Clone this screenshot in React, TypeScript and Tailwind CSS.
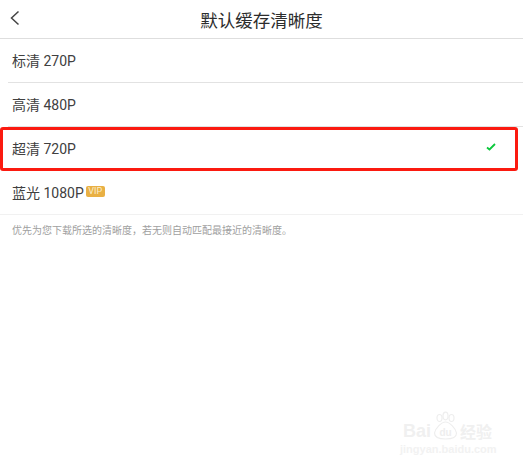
import React from "react";

const font = { fontFamily: '"Roboto", "Noto Sans CJK SC", sans-serif' };

const Row = ({ label }: { label: string }) => (
  <div className="ml-2 h-11 flex items-center pl-1 pr-6 pt-[2px] border-b border-[#e2e2e2]">
    <span className="text-[14px] text-[#404040]">{label}</span>
  </div>
);

const App = () => {
  return (
    <div className="relative w-[523px] h-[468px] bg-white overflow-hidden" style={font}>
      {/* Header */}
      <div className="relative h-[39px] pt-[4px] border-b border-[#dedede] flex items-center justify-center">
        <svg className="absolute left-[9px] top-[10px]" width="12" height="16" viewBox="0 0 12 16" fill="none">
          <path d="M9.5 1.5 L2.5 8 L9.5 14.5" stroke="#444" strokeWidth="1.5" />
        </svg>
        <h1 className="text-[17.5px] font-normal text-[#2c2c2c]">默认缓存清晰度</h1>
      </div>

      <Row label="标清 270P" />
      <Row label="高清 480P" />

      {/* Selected row */}
      <div className="relative h-11 flex items-center pl-3 pr-[27px] pt-[1px] justify-between">
        <span className="text-[14px] text-[#404040]">超清 720P</span>
        <svg width="10" height="8" viewBox="0 0 10 8" fill="none" className="mb-[5px]">
          <path d="M1 4.5 L3.5 6.5 L9 1" stroke="#0cc83c" strokeWidth="1.8" />
        </svg>
        <div className="absolute left-0 top-0 w-[518px] h-[44px] border-[3px] border-[#fb1a10] rounded-[3px]" />
      </div>

      <div className="h-[44px] flex items-center pl-3 pt-[1px] border-b border-[#f1f1f1]">
        <span className="text-[14px] text-[#404040]">蓝光 1080P</span>
        <span className="ml-[2px] w-[19px] h-[11px] mb-[3px] rounded-[2px] bg-[#e9b044] text-[9px] leading-[11px] text-center text-[#fbeecb]">
          VIP
        </span>
      </div>

      <p className="pl-3 pt-[9px] text-[10px] leading-[13px] text-[#a0a0a0]">
        优先为您下载所选的清晰度，若无则自动匹配最接近的清晰度。
      </p>

      {/* Watermark */}
      <div className="absolute left-[403px] top-[411px] w-[112px] text-[#f0f0f0] select-none">
        <div className="flex items-end h-[30px]">
          <span className="text-[18px] leading-[20px] font-bold" style={{ fontFamily: '"Liberation Sans", sans-serif' }}>Bai</span>
          <svg width="29" height="30" viewBox="0 0 26 30" className="shrink-0">
            <g fill="none" stroke="#eeeeee" strokeWidth="1.2">
              <ellipse cx="7" cy="7" rx="2.5" ry="3.5" />
              <ellipse cx="13" cy="5" rx="2.5" ry="3.8" />
              <ellipse cx="19" cy="7" rx="2.5" ry="3.5" />
              <path d="M13 11 C9 11 3 17 2 22 C2 27 7 28 13 28 C19 28 24 27 24 22 C23 17 17 11 13 11 Z" />
            </g>
            <text x="13" y="25" textAnchor="middle" fontSize="10" fontWeight="700" fill="#eeeeee" fontFamily="Liberation Sans">du</text>
          </svg>
          <span className="text-[16px] leading-[20px] font-bold" style={{ fontFamily: '"Noto Sans CJK SC", sans-serif' }}>经验</span>
        </div>
        <div className="-ml-[3px] mt-[2px] text-[11px] leading-[13px] font-bold text-[#f2f2f2]" style={{ fontFamily: '"Liberation Sans", sans-serif' }}>
          jingyan.baidu.com
        </div>
      </div>
    </div>
  );
};

export default App;
